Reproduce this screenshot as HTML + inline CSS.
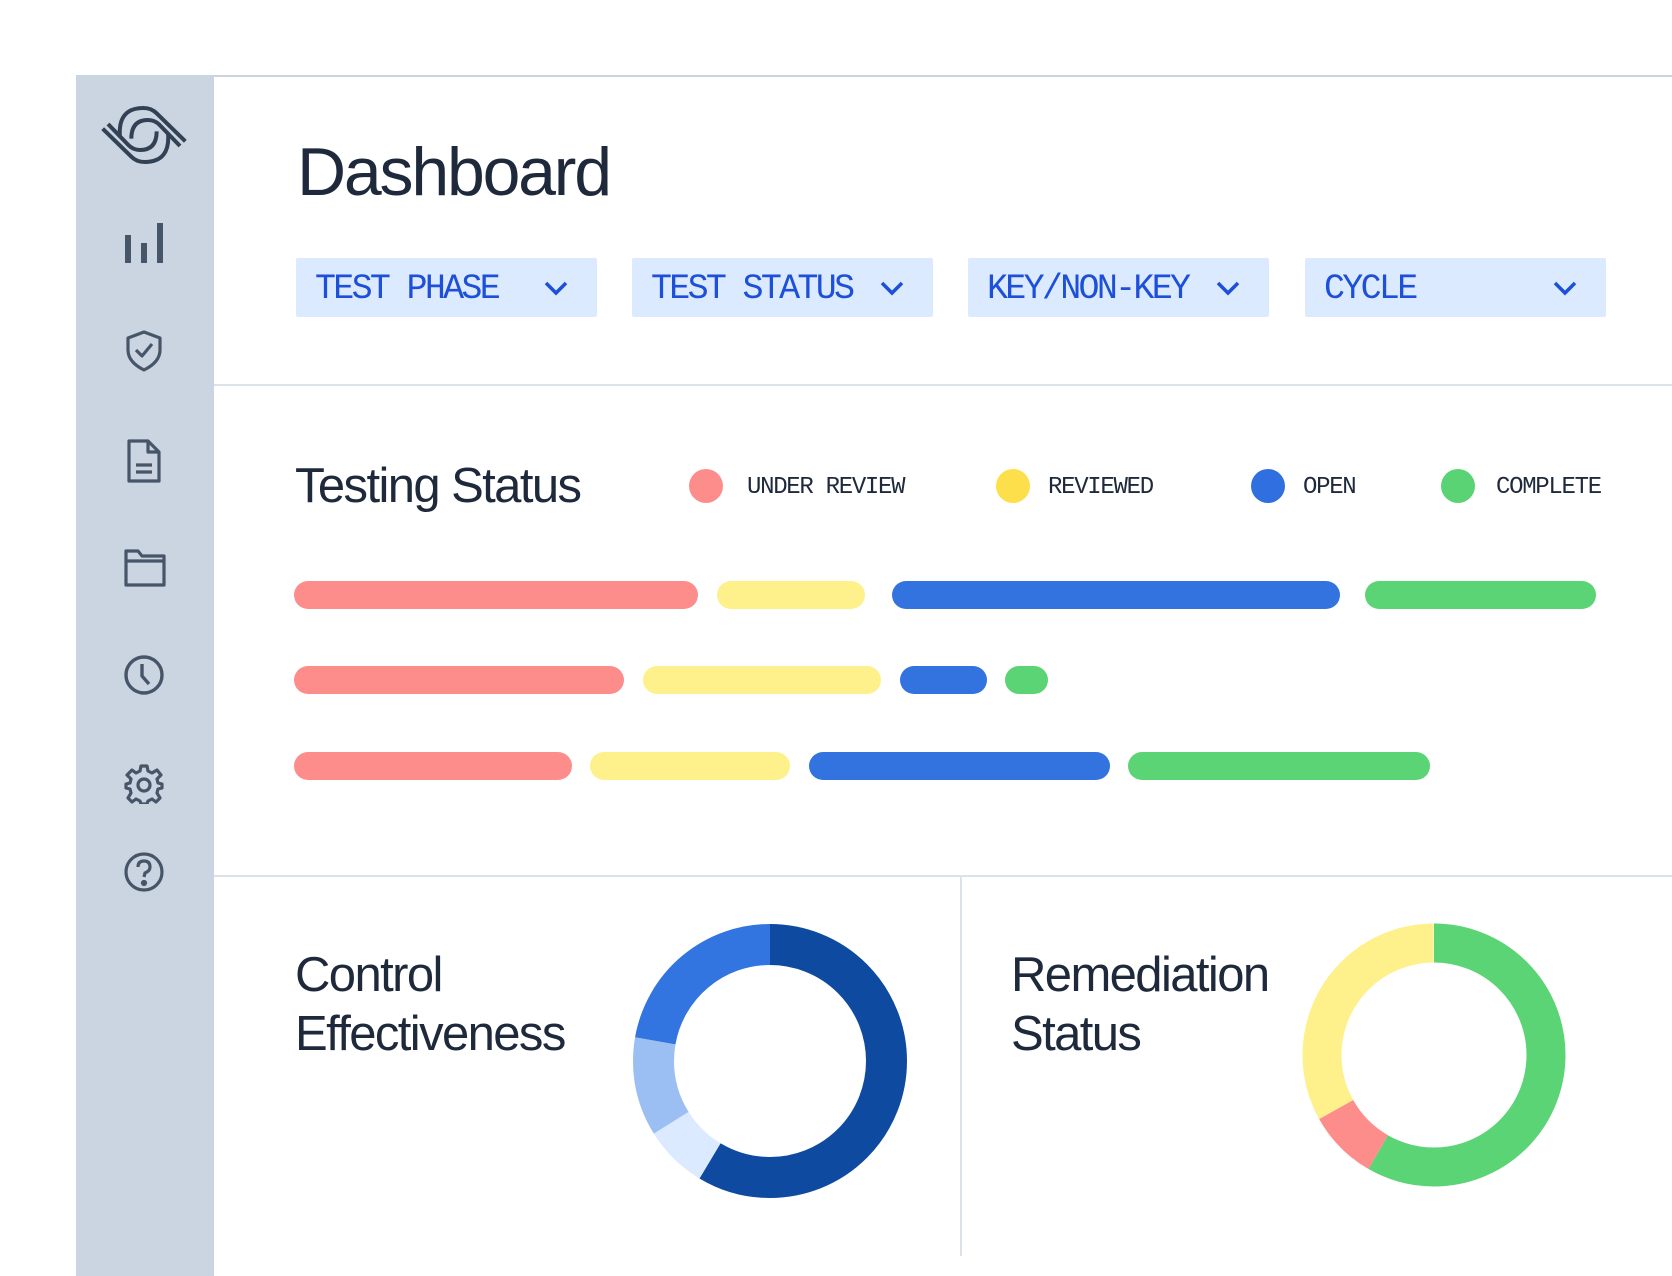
<!DOCTYPE html>
<html><head><meta charset="utf-8"><style>
*{margin:0;padding:0;box-sizing:border-box}
body{width:1672px;height:1254px;background:#fff;position:relative;overflow:hidden;font-family:"Liberation Sans",sans-serif;color:#1e293b}
.abs{position:absolute}
.line{position:absolute;background:#cbd5e1}
.dd{position:absolute;top:258px;height:59px;width:301px;background:#dbeafe;border-radius:2px}
.dd span{position:absolute;left:19px;top:14px;font-family:"Liberation Mono",monospace;font-size:35px;letter-spacing:-2.7px;color:#1d4fd8;line-height:35px}
.dd svg{position:absolute;top:21px;right:28px}
.bar{position:absolute;height:28px;border-radius:14px}
.r{background:#fd8d8b}.y{background:#fef08a}.b{background:#3273e0}.g{background:#5bd475}
.lg{position:absolute;top:474px;font-family:"Liberation Mono",monospace;font-size:24px;letter-spacing:-1.3px;color:#1e293b}
.dot{position:absolute;top:469px;width:34px;height:34px;border-radius:50%}
h2{position:absolute;font-weight:400;font-size:49px;letter-spacing:-1.6px;line-height:59px;color:#1e293b}
</style></head><body>
<div class="line" style="left:76px;top:75px;width:1600px;height:2px"></div>
<div class="abs" style="left:76px;top:76px;width:138px;height:1200px;background:#cbd5e1"></div>
<div class="line" style="left:214px;top:384px;width:1460px;height:2px;background:#dbe2ea"></div>
<div class="line" style="left:214px;top:875px;width:1460px;height:2px;background:#dbe2ea"></div>
<div class="line" style="left:960px;top:876px;width:2px;height:380px;background:#dbe2ea"></div>

<svg class="abs" style="left:98px;top:100px" width="92" height="70" viewBox="0 0 276 210" fill="none" stroke="#334155" stroke-width="12">
<path d="M66 112 Q58 24 136 24 Q160 24 176 40 L262 124"/>
<path d="M100 116 Q100 60 150 60 Q170 60 184 74 L246 138"/>
<path d="M210 98 Q218 186 140 186 Q116 186 100 170 L14 86"/>
<path d="M176 94 Q176 150 126 150 Q106 150 92 136 L30 72"/>
</svg>
<svg class="abs" style="left:124px;top:223px" width="40" height="40" viewBox="0 0 40 40" fill="#475569"><rect x="1" y="12" width="6" height="28"/><rect x="17" y="20" width="6" height="20"/><rect x="33" y="0" width="6" height="40"/></svg>
<svg class="abs" style="left:124px;top:330px" width="40" height="42" viewBox="0 0 40 42" fill="none" stroke="#475569" stroke-width="3.2" stroke-linejoin="round"><path d="M20 2 L36 8 L36 20 Q36 32 20 40 Q4 32 4 20 L4 8 Z"/><path d="M12 20 L18 26 L28 14"/></svg>
<svg class="abs" style="left:126px;top:439px" width="36" height="44" viewBox="0 0 36 44" fill="none" stroke="#475569" stroke-width="3.2" stroke-linejoin="round"><path d="M3 2 L22 2 L33 13 L33 42 L3 42 Z"/><path d="M22 2 L22 13 L33 13"/><path d="M10 26 H26 M10 33 H26"/></svg>
<svg class="abs" style="left:124px;top:549px" width="42" height="38" viewBox="0 0 42 38" fill="none" stroke="#475569" stroke-width="3.2" stroke-linejoin="round"><path d="M2 2 L14 2 L18 7 L40 7 L40 36 L2 36 Z"/><path d="M2 12 L40 12"/></svg>
<svg class="abs" style="left:124px;top:655px" width="40" height="40" viewBox="0 0 40 40" fill="none" stroke="#475569" stroke-width="3.4"><ellipse cx="20" cy="20" rx="18" ry="18"/><path d="M18 9 L18 21 L25 29"/></svg>
<svg class="abs" style="left:124px;top:764px" width="40" height="40" viewBox="0 0 40 40" fill="none" stroke="#475569" stroke-width="3.2" stroke-linejoin="round"><path d="M17 2 H23 L24 7 L28 9 L33 6 L37 11 L33 15 L34 19 L38 20 V24 L34 25 L33 29 L36 34 L32 38 L28 35 L24 37 L23 40 H17 L16 37 L12 35 L8 38 L4 34 L7 29 L6 25 L2 24 V20 L6 19 L7 15 L3 11 L8 6 L12 9 L16 7 Z"/><circle cx="20" cy="21" r="6"/></svg>
<svg class="abs" style="left:124px;top:852px" width="40" height="40" viewBox="0 0 40 40" fill="none" stroke="#475569" stroke-width="3.2"><circle cx="20" cy="20" r="18"/><path d="M14 15 Q14 9 20 9 Q26 9 26 15 Q26 19 21 21 L20 25"/><circle cx="20" cy="31" r="1.5" fill="#475569"/></svg>

<div class="abs" style="left:297px;top:133px;font-size:68px;letter-spacing:-2.2px;line-height:78px;color:#1e293b">Dashboard</div>

<div class="dd" style="left:296px"><span>TEST PHASE</span><svg width="26" height="18" viewBox="0 0 26 18" fill="none" stroke="#1d4fd8" stroke-width="3.5"><path d="M3 4 L13 14 L23 4"/></svg></div>
<div class="dd" style="left:632px"><span>TEST STATUS</span><svg width="26" height="18" viewBox="0 0 26 18" fill="none" stroke="#1d4fd8" stroke-width="3.5"><path d="M3 4 L13 14 L23 4"/></svg></div>
<div class="dd" style="left:968px"><span>KEY/NON-KEY</span><svg width="26" height="18" viewBox="0 0 26 18" fill="none" stroke="#1d4fd8" stroke-width="3.5"><path d="M3 4 L13 14 L23 4"/></svg></div>
<div class="dd" style="left:1305px"><span>CYCLE</span><svg width="26" height="18" viewBox="0 0 26 18" fill="none" stroke="#1d4fd8" stroke-width="3.5"><path d="M3 4 L13 14 L23 4"/></svg></div>

<h2 style="left:295px;top:457px">Testing Status</h2>
<div class="dot" style="left:689px;background:#fd8d8a"></div><div class="lg" style="left:747px">UNDER REVIEW</div>
<div class="dot" style="left:996px;background:#fcdf4a"></div><div class="lg" style="left:1048px">REVIEWED</div>
<div class="dot" style="left:1251px;background:#2f6fe0"></div><div class="lg" style="left:1303px">OPEN</div>
<div class="dot" style="left:1441px;background:#5ad374"></div><div class="lg" style="left:1496px">COMPLETE</div>

<div class="bar r" style="top:581px;left:294px;width:404px"></div>
<div class="bar y" style="top:581px;left:717px;width:148px"></div>
<div class="bar b" style="top:581px;left:892px;width:448px"></div>
<div class="bar g" style="top:581px;left:1365px;width:231px"></div>
<div class="bar r" style="top:666px;left:294px;width:330px"></div>
<div class="bar y" style="top:666px;left:643px;width:238px"></div>
<div class="bar b" style="top:666px;left:900px;width:87px"></div>
<div class="bar g" style="top:666px;left:1005px;width:43px"></div>
<div class="bar r" style="top:752px;left:294px;width:278px"></div>
<div class="bar y" style="top:752px;left:590px;width:200px"></div>
<div class="bar b" style="top:752px;left:809px;width:301px"></div>
<div class="bar g" style="top:752px;left:1128px;width:302px"></div>

<h2 style="left:295px;top:946px">Control<br>Effectiveness</h2>
<h2 style="left:1011px;top:946px">Remediation<br>Status</h2>

<svg class="abs" style="left:0;top:0" width="1672" height="1254">
<g transform="rotate(-90 770 1061)" fill="none" stroke-width="41">
<circle cx="770" cy="1061" r="116.5" pathLength="360" stroke="#0f4aa1" stroke-dasharray="211 500"/>
<circle cx="770" cy="1061" r="116.5" pathLength="360" stroke="#dbeafe" stroke-dasharray="0 211 27 500"/>
<circle cx="770" cy="1061" r="116.5" pathLength="360" stroke="#9bbff2" stroke-dasharray="0 238 42 500"/>
<circle cx="770" cy="1061" r="116.5" pathLength="360" stroke="#3274e0" stroke-dasharray="0 280 80 500"/>
</g>
<g transform="rotate(-90 1434 1055)" fill="none" stroke-width="39">
<circle cx="1434" cy="1055" r="112" pathLength="360" stroke="#5bd475" stroke-dasharray="210 500"/>
<circle cx="1434" cy="1055" r="112" pathLength="360" stroke="#fd8d8a" stroke-dasharray="0 210 31 500"/>
<circle cx="1434" cy="1055" r="112" pathLength="360" stroke="#fef08a" stroke-dasharray="0 241 119 500"/>
</g>
</svg>
</body></html>
